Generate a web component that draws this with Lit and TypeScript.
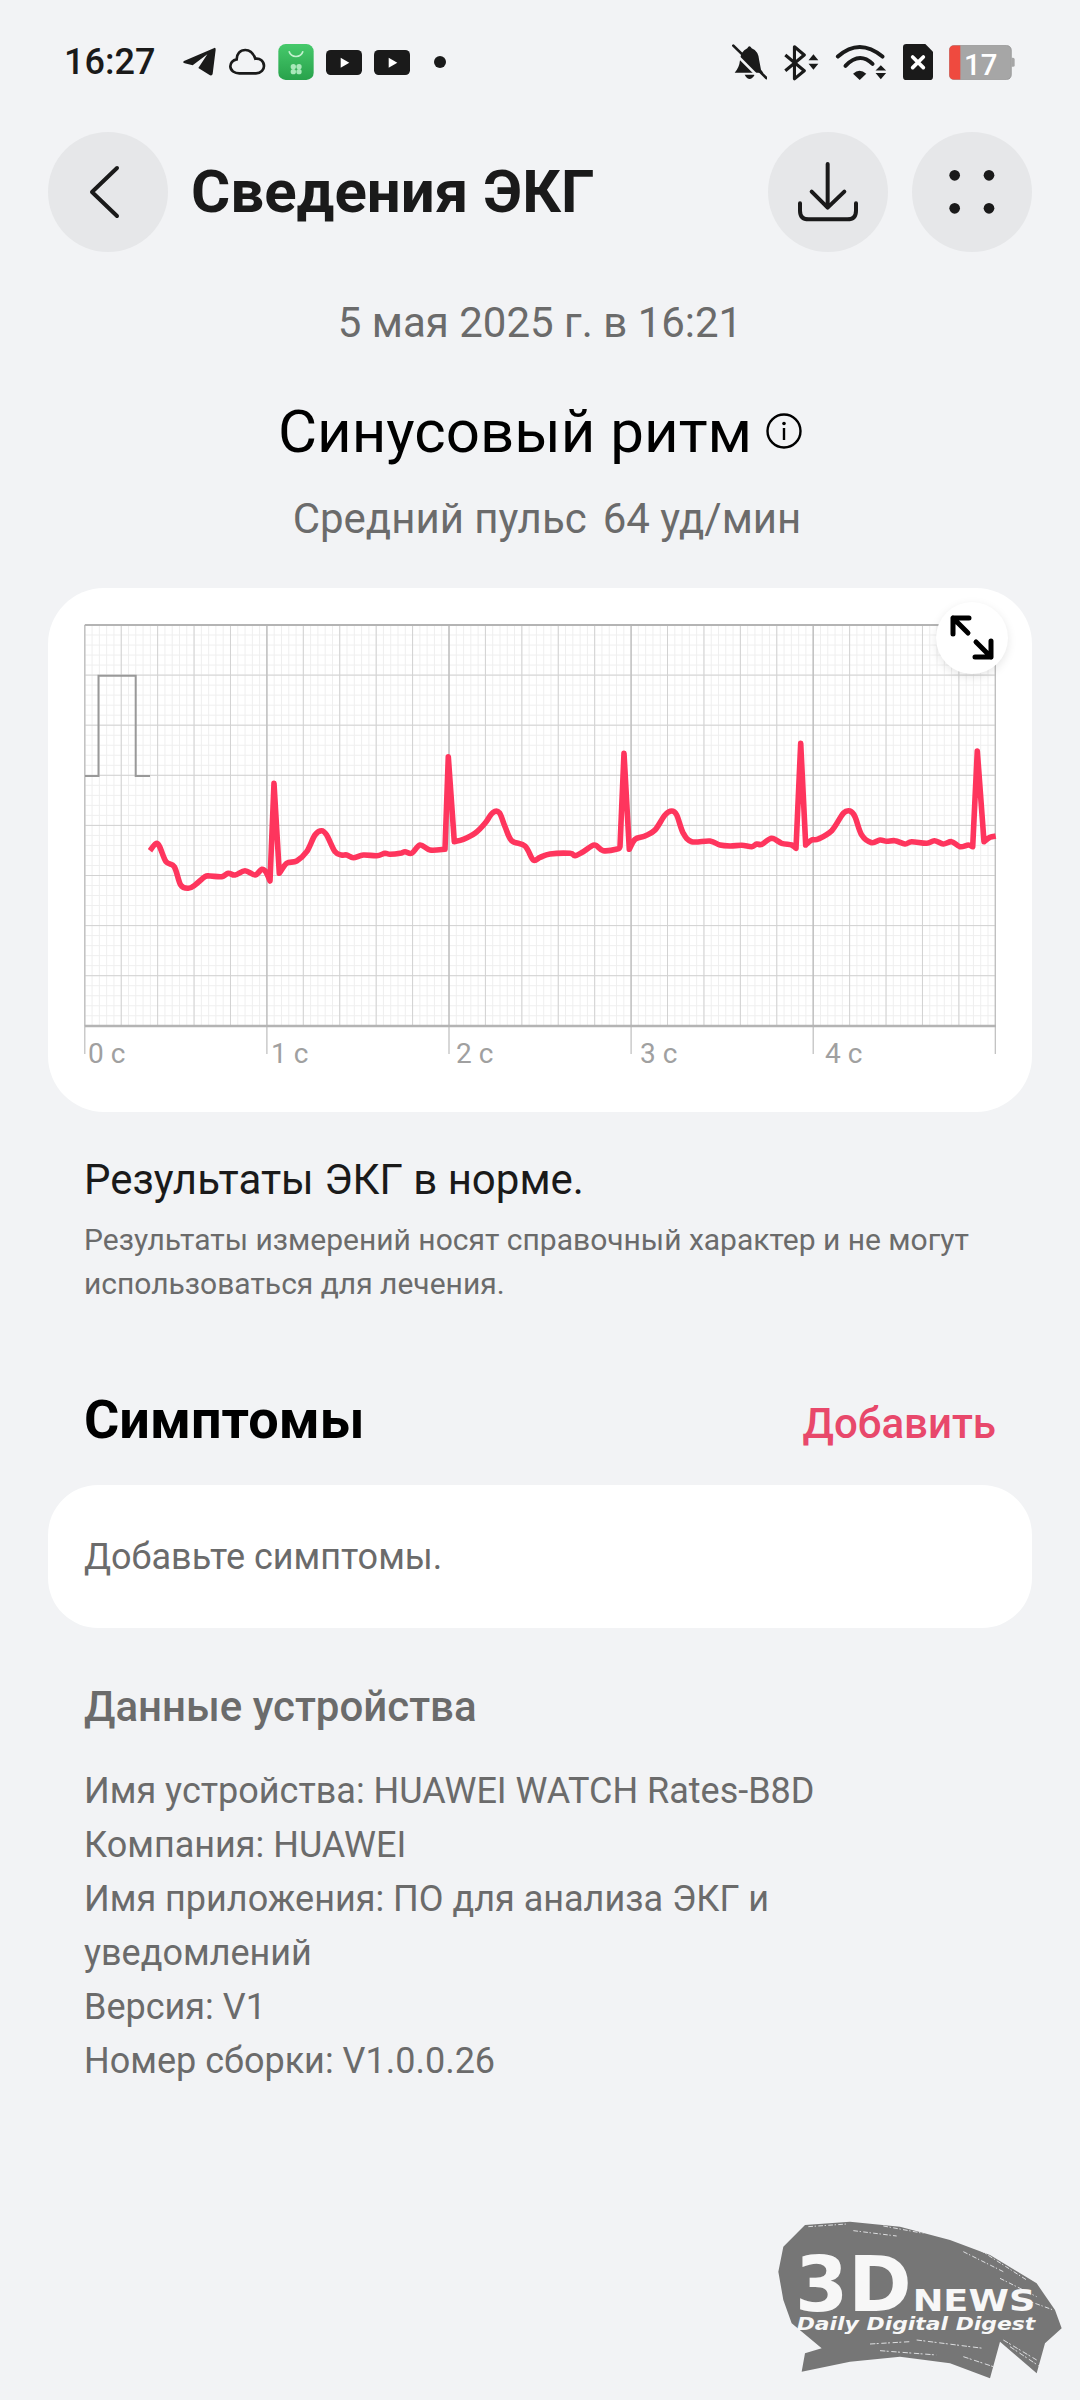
import { LitElement, html, svg, css } from 'lit';
import { customElement } from 'lit/decorators.js';

// chart frame in page pixels
const L = 84.8, R = 996, T = 625, B = 1026;
const SEC = 182.1, ROW = 50.1;

type Pt = { x: number; y: number; spike: boolean };

// trace points read off the reference, zoomed by 3 around an origin; negative y marks an R peak
const pts = (ox: number, oy: number, s: string): Pt[] =>
  s.trim().split(/\s+/).map((p) => {
    const [x, y] = p.split(',').map(Number);
    return { x: ox + x / 3, y: oy + y / 3, spike: y < 0 };
  });

const TRACE = [
  ...pts(40, 800, `330,152 347,131 358,138 378,185 403,200 422,255 445,265 465,255 495,230 510,228 545,230 565,220 585,225
    615,212 645,225 665,208 677,215 690,243 702,-50 718,220 740,190 770,183 800,155 825,105 845,92 860,105 885,155 905,165
    920,165 940,173 970,165 1010,167 1035,160 1050,163 1080,160 1095,155 1115,160 1140,135 1170,150 1215,148 1225,-130
    1243,125 1270,118 1305,100 1335,70 1358,38 1378,38 1395,80 1415,122 1455,138 1480,180 1500,172`),
  ...pts(540, 800, `30,162 90,160 105,167 130,155 163,135 190,152 232,147 240,140 252,-140 268,148 285,118 315,108 345,90
    375,45 395,33 410,45 430,100 455,125 510,123 540,135 570,138 605,136 635,140 650,132 665,133 695,115 725,130 755,135
    768,145 782,-170 797,135 815,120 835,117 875,92 910,40 930,33 945,50 965,105 995,128 1020,120 1040,124 1065,122
    1095,132 1115,125 1160,130 1183,122 1210,132 1235,125 1260,140 1285,135 1298,140 1312,-147 1332,125 1350,112 1367,108`),
];

// smooth curve through the points, straight into and out of each R peak
const tracePath = (p: Pt[]) => {
  let d = `M${p[0].x.toFixed(1)} ${p[0].y.toFixed(1)}`;
  for (let i = 0; i < p.length - 1; i++) {
    const a = p[i], b = p[i + 1];
    if (a.spike || b.spike) {
      d += `L${b.x.toFixed(1)} ${b.y.toFixed(1)}`;
      continue;
    }
    const prev = p[i - 1] && !p[i - 1].spike ? p[i - 1] : a;
    const next = p[i + 2] && !p[i + 2].spike ? p[i + 2] : b;
    const c1x = a.x + (b.x - prev.x) / 6, c1y = a.y + (b.y - prev.y) / 6;
    const c2x = b.x - (next.x - a.x) / 6, c2y = b.y - (next.y - a.y) / 6;
    d += `C${c1x.toFixed(1)} ${c1y.toFixed(1)} ${c2x.toFixed(1)} ${c2y.toFixed(1)} ${b.x.toFixed(1)} ${b.y.toFixed(1)}`;
  }
  return d;
};

const range = (n: number) => Array.from({ length: n }, (_, i) => i);

@customElement('app-root')
export class AppRoot extends LitElement {
  static styles = css`
    :host {
      display: block;
      position: relative;
      width: 1080px;
      height: 2400px;
      overflow: hidden;
      background: #f2f3f5;
      font-family: Roboto, 'Noto Sans', sans-serif;
      color: #6b6b6b;
    }
    svg { display: block; flex: none; }

    .status {
      height: 124px;
      padding: 0 65px 0 64px;
      display: flex;
      align-items: center;
      justify-content: space-between;
    }
    .status-side { display: flex; align-items: center; }
    .time { font-size: 36px; font-weight: 500; color: #1a1a1a; margin-right: 27px; }
    .gap-s { margin-left: 12px; }
    .gap-m { margin-left: 16px; }
    .gap-l { margin-left: 24px; }

    .header {
      margin-top: 8px;
      padding: 0 48px;
      height: 120px;
      display: flex;
      align-items: center;
    }
    .round { width: 120px; height: 120px; border-radius: 50%; background: #e6e7e9; flex: none; }
    .title { margin-left: 23px; flex: 1; font-size: 60px; font-weight: 700; color: #1a1a1a; line-height: 70px; }
    .round + .round { margin-left: 24px; }

    .center { text-align: center; }
    .date { margin-top: 46px; font-size: 42px; line-height: 50px; }
    .rhythm {
      margin-top: 48px;
      height: 70px;
      display: flex;
      align-items: center;
      justify-content: center;
      gap: 14px;
      font-size: 60px;
      color: #000;
    }
    .pulse {
      margin-top: 28px;
      padding-left: 14px;
      font-size: 42px;
      line-height: 50px;
      display: flex;
      justify-content: center;
      gap: 16px;
    }

    .card { position: relative; margin: 44px 48px 0; height: 524px; border-radius: 56px; background: #fff; }
    .expand {
      position: absolute;
      top: 14px;
      right: 24px;
      width: 72px;
      height: 72px;
      border-radius: 50%;
      background: #fff;
      box-shadow: 0 3px 10px rgba(0, 0, 0, 0.1);
    }
    .axis { font-size: 28px; fill: #a0a0a0; }

    .copy { padding: 0 84px; }
    .normal { margin-top: 43px; font-size: 42px; line-height: 50px; color: #1a1a1a; }
    .note { margin-top: 13px; font-size: 30px; line-height: 44px; }

    .sym-row { margin-top: 83px; padding: 0 84px; height: 60px; display: flex; align-items: center; justify-content: space-between; }
    .sym-title { font-size: 54px; font-weight: 700; color: #000; }
    .sym-add { font-size: 42px; font-weight: 500; color: #e8486b; padding-top: 8px; }
    .sym-card {
      margin: 36px 48px 0;
      height: 143px;
      padding-left: 36px;
      border-radius: 50px;
      background: #fff;
      display: flex;
      align-items: center;
      font-size: 36px;
    }

    .dev-title { margin-top: 54px; font-size: 42px; font-weight: 500; line-height: 50px; }
    .dev-list { margin-top: 32px; font-size: 36px; line-height: 54px; }

    .mark { position: absolute; left: 750px; top: 2200px; }
  `;

  private chart() {
    const small = range(125).map((i) => L + (i * SEC) / 25);
    const med = range(26).map((i) => L + (i * SEC) / 5);
    const secs = range(6).map((i) => L + i * SEC);
    const rowsSmall = range(41).map((i) => T + (i * ROW) / 5);
    const rows = range(8).map((i) => T + (i + 1) * ROW);
    const labels: [string, number][] = [['0 с', 88], ['1 с', 271], ['2 с', 456], ['3 с', 640], ['4 с', 825]];
    return svg`
      <svg width="984" height="524" viewBox="48 588 984 524">
        <g stroke="#efefef" stroke-width="1">
          ${small.map((x) => svg`<line x1=${x} x2=${x} y1=${T} y2=${B} />`)}
          ${rowsSmall.map((y) => svg`<line x1=${L} x2=${R} y1=${y} y2=${y} />`)}
        </g>
        <g stroke="#d2d2d2" stroke-width="1">
          ${med.map((x) => svg`<line x1=${x} x2=${x} y1=${T} y2=${B} />`)}
          ${rows.map((y) => svg`<line x1=${L} x2=${R} y1=${y} y2=${y} />`)}
        </g>
        <g stroke="#bdbdbd" stroke-width="1.2">
          ${secs.map((x) => svg`<line x1=${x} x2=${x} y1=${T} y2=1054 />`)}
        </g>
        <line x1=${L} x2=${R} y1=${T} y2=${T} stroke="#b4b4b4" stroke-width="2" />
        <line x1=${L} x2=${R} y1=${B} y2=${B} stroke="#b4b4b4" stroke-width="2.5" />
        <path d="M85 776H98.5V675.7H135.7V776H150" fill="none" stroke="#999" stroke-width="2" />
        <path d=${tracePath(TRACE)} fill="none" stroke="#fe355d" stroke-width="5.6" stroke-linejoin="round" />
        ${labels.map(([t, x]) => svg`<text class="axis" x=${x} y="1063">${t}</text>`)}
      </svg>`;
  }

  private leftIcons() {
    return html`
      <svg width="34" height="30" viewBox="36 42 102 90">
        <path d="M133 45 42 84Q36 88 44 91L68 97 112 64 85 105 120 127Q127 129 128 122L137 50Q137 43 133 45Z" fill="#1a1a1a" />
      </svg>
      <svg class="gap-s" width="38" height="28" viewBox="174 42 114 84">
        <path d="M208 118H258C274 118 282 106 282 96 282 82 270 72 256 74 250 58 238 48 226 48 210 48 200 60 200 76 188 78 181 88 181 97 181 110 194 118 208 118Z"
          fill="none" stroke="#1a1a1a" stroke-width="8" />
      </svg>
      <svg class="gap-s" width="36" height="36" viewBox="322 28 106 108">
        <defs>
          <linearGradient id="tile" x1="0" y1="0" x2="0" y2="1">
            <stop offset="0" stop-color="#46c96b" /><stop offset="1" stop-color="#28a24b" />
          </linearGradient>
        </defs>
        <rect x="322" y="28" width="106" height="108" rx="22" fill="url(#tile)" />
        <path d="M354 50A22 22 0 0 0 396 50" fill="none" stroke="#c4f1cf" stroke-width="5" />
        <g fill="#a9e8ba">
          <circle cx="367" cy="96" r="8" /><circle cx="384" cy="96" r="8" />
          <circle cx="367" cy="111" r="8" /><circle cx="384" cy="111" r="8" />
        </g>
      </svg>
      ${[0, 1].map(() => html`
        <svg class="gap-s" width="36" height="25" viewBox="465 45 108 75">
          <rect x="465" y="45" width="108" height="75" rx="14" fill="#1a1a1a" />
          <path d="M509 68 535 83 509 98Z" fill="#fff" />
        </svg>`)}
      <svg class="gap-l" width="12" height="12" viewBox="0 0 12 12"><circle cx="6" cy="6" r="6" fill="#1a1a1a" /></svg>
    `;
  }

  private rightIcons() {
    return html`
      <svg width="35" height="36" viewBox="40 42 105 106">
        <path d="M86 54Q92 42 99 54 120 62 122 92L127 118 134 127H48Q62 112 64 90 65 64 86 54Z" fill="#1a1a1a" />
        <path d="M78 133H108Q100 146 93 146 85 146 78 133Z" fill="#1a1a1a" />
        <path d="M36 56 130 150" stroke="#f2f3f5" stroke-width="8" />
        <path d="M44 46 143 143" stroke="#1a1a1a" stroke-width="8" stroke-linecap="round" />
      </svg>
      <svg class="gap-m" width="36" height="37" viewBox="190 40 110 112">
        <path d="M197 73 255 121 225 146V48L255 73 197 121" fill="none" stroke="#1a1a1a" stroke-width="9.5" stroke-linejoin="round" />
        <path d="M283 71 298 89H268ZM283 118 298 100H268Z" fill="#1a1a1a" />
      </svg>
      <svg class="gap-m" width="52" height="37" viewBox="342 40 156 112">
        <g fill="none" stroke="#1a1a1a" stroke-width="12" stroke-linecap="round">
          <path d="M350 78Q415 20 485 78" />
          <path d="M373 106Q415 62 455 100" />
        </g>
        <path d="M396 130Q415 112 436 130L416 149Z" fill="#1a1a1a" />
        <path d="M480 104 496 120H464ZM480 147 496 128H464Z" fill="#1a1a1a" />
      </svg>
      <svg class="gap-m" width="30" height="36" viewBox="543 42 90 108">
        <path d="M553 42H610L633 65V140Q633 150 623 150H553Q543 150 543 140V52Q543 42 553 42Z" fill="#1a1a1a" />
        <path d="M572 81 604 113M604 81 572 113" stroke="#fff" stroke-width="11" stroke-linecap="round" />
      </svg>
      <svg class="gap-m" width="66" height="35" viewBox="688 47 198 104">
        <rect x="689" y="48" width="186" height="102" rx="14" fill="#a6a6a6" stroke="#8f8f8f" stroke-width="2" />
        <path d="M703 48H722V150H703Q689 150 689 136V62Q689 48 703 48Z" fill="#ef4a3f" />
        <path d="M875 85H880Q885 85 885 90V107Q885 112 880 112H875Z" fill="#a6a6a6" />
        <text x="733" y="135" font-size="88" font-weight="500" fill="#fff" font-family="Roboto, sans-serif">17</text>
      </svg>
    `;
  }

  private watermark() {
    return html`
      <svg class="mark" width="330" height="200" viewBox="0 0 990 600">
        <path fill="#767676" d="M165 75 300 65 450 80 600 120 720 165 860 250 915 330 935 385 885 430 860 520 750 425 720 535 600 490 450 470 300 485 155 515 165 460 215 445 125 370 100 300 85 215 100 140Z" />
        <g stroke="#f2f3f5" stroke-width="2.5" fill="none">
          <path d="M175 80 290 72M310 92 440 108M400 78 520 100M640 155 760 215M690 150 830 240M750 235 860 290M800 290 910 330" stroke-dasharray="14 5 4 7" />
          <path d="M360 432 480 425M390 452 560 465M500 420 700 445M640 470 730 500M760 420 860 480M780 440 870 500" stroke-dasharray="16 4 6 8" />
        </g>
        <g fill="#f7f7f7" font-family="'DejaVu Sans', sans-serif" font-weight="700">
          <text x="135" y="333" font-size="232" textLength="350" lengthAdjust="spacingAndGlyphs">3D</text>
          <text x="488" y="333" font-size="90" textLength="368" lengthAdjust="spacingAndGlyphs">NEWS</text>
          <text x="140" y="390" font-size="54" font-style="italic" textLength="716" lengthAdjust="spacingAndGlyphs">Daily Digital Digest</text>
        </g>
      </svg>`;
  }

  render() {
    return html`
      <div class="status">
        <div class="status-side"><span class="time">16:27</span>${this.leftIcons()}</div>
        <div class="status-side">${this.rightIcons()}</div>
      </div>

      <div class="header">
        <svg class="round" viewBox="48 132 120 120">
          <path d="M117 168 92 192 117 216" fill="none" stroke="#1a1a1a" stroke-width="4" stroke-linecap="round" stroke-linejoin="round" />
        </svg>
        <div class="title">Сведения ЭКГ</div>
        <svg class="round" viewBox="384 396 360 360">
          <g fill="none" stroke="#1a1a1a" stroke-width="12" stroke-linecap="round" stroke-linejoin="round">
            <path d="M563 492V622M515 575 563 623 613 575" />
            <path d="M480 610V632Q480 658 506 658H622Q648 658 648 632V610" />
          </g>
        </svg>
        <svg class="round" viewBox="816 396 360 360">
          <g fill="#1a1a1a">
            <circle cx="944" cy="526" r="16" /><circle cx="1047" cy="526" r="16" />
            <circle cx="944" cy="625" r="16" /><circle cx="1047" cy="625" r="16" />
          </g>
        </svg>
      </div>

      <div class="date center">5 мая 2025 г. в 16:21</div>
      <div class="rhythm">
        <span>Синусовый ритм</span>
        <svg width="36" height="36" viewBox="0 0 36 36">
          <circle cx="18" cy="18" r="16.5" fill="none" stroke="#000" stroke-width="2.4" />
          <circle cx="18" cy="10.5" r="1.8" fill="#000" />
          <rect x="16.8" y="15" width="2.4" height="12" fill="#000" />
        </svg>
      </div>
      <div class="pulse"><span>Средний пульс</span><span>64 уд/мин</span></div>

      <div class="card">
        ${this.chart()}
        <div class="expand">
          <svg width="72" height="72" viewBox="0 0 72 72">
            <g fill="none" stroke="#000" stroke-width="5" stroke-linecap="round" stroke-linejoin="round">
              <path d="M17 32V16H33M17 16 32 31M40 40 55 55M55 39V55H39" />
            </g>
          </svg>
        </div>
      </div>

      <div class="copy">
        <div class="normal">Результаты ЭКГ в норме.</div>
        <div class="note">Результаты измерений носят справочный характер и не могут использоваться для лечения.</div>
      </div>

      <div class="sym-row">
        <span class="sym-title">Симптомы</span>
        <span class="sym-add">Добавить</span>
      </div>
      <div class="sym-card">Добавьте симптомы.</div>

      <div class="copy">
        <div class="dev-title">Данные устройства</div>
        <div class="dev-list">
          <div>Имя устройства: HUAWEI WATCH Rates-B8D</div>
          <div>Компания: HUAWEI</div>
          <div>Имя приложения: ПО для анализа ЭКГ и уведомлений</div>
          <div>Версия: V1</div>
          <div>Номер сборки: V1.0.0.26</div>
        </div>
      </div>

      ${this.watermark()}
    `;
  }
}
